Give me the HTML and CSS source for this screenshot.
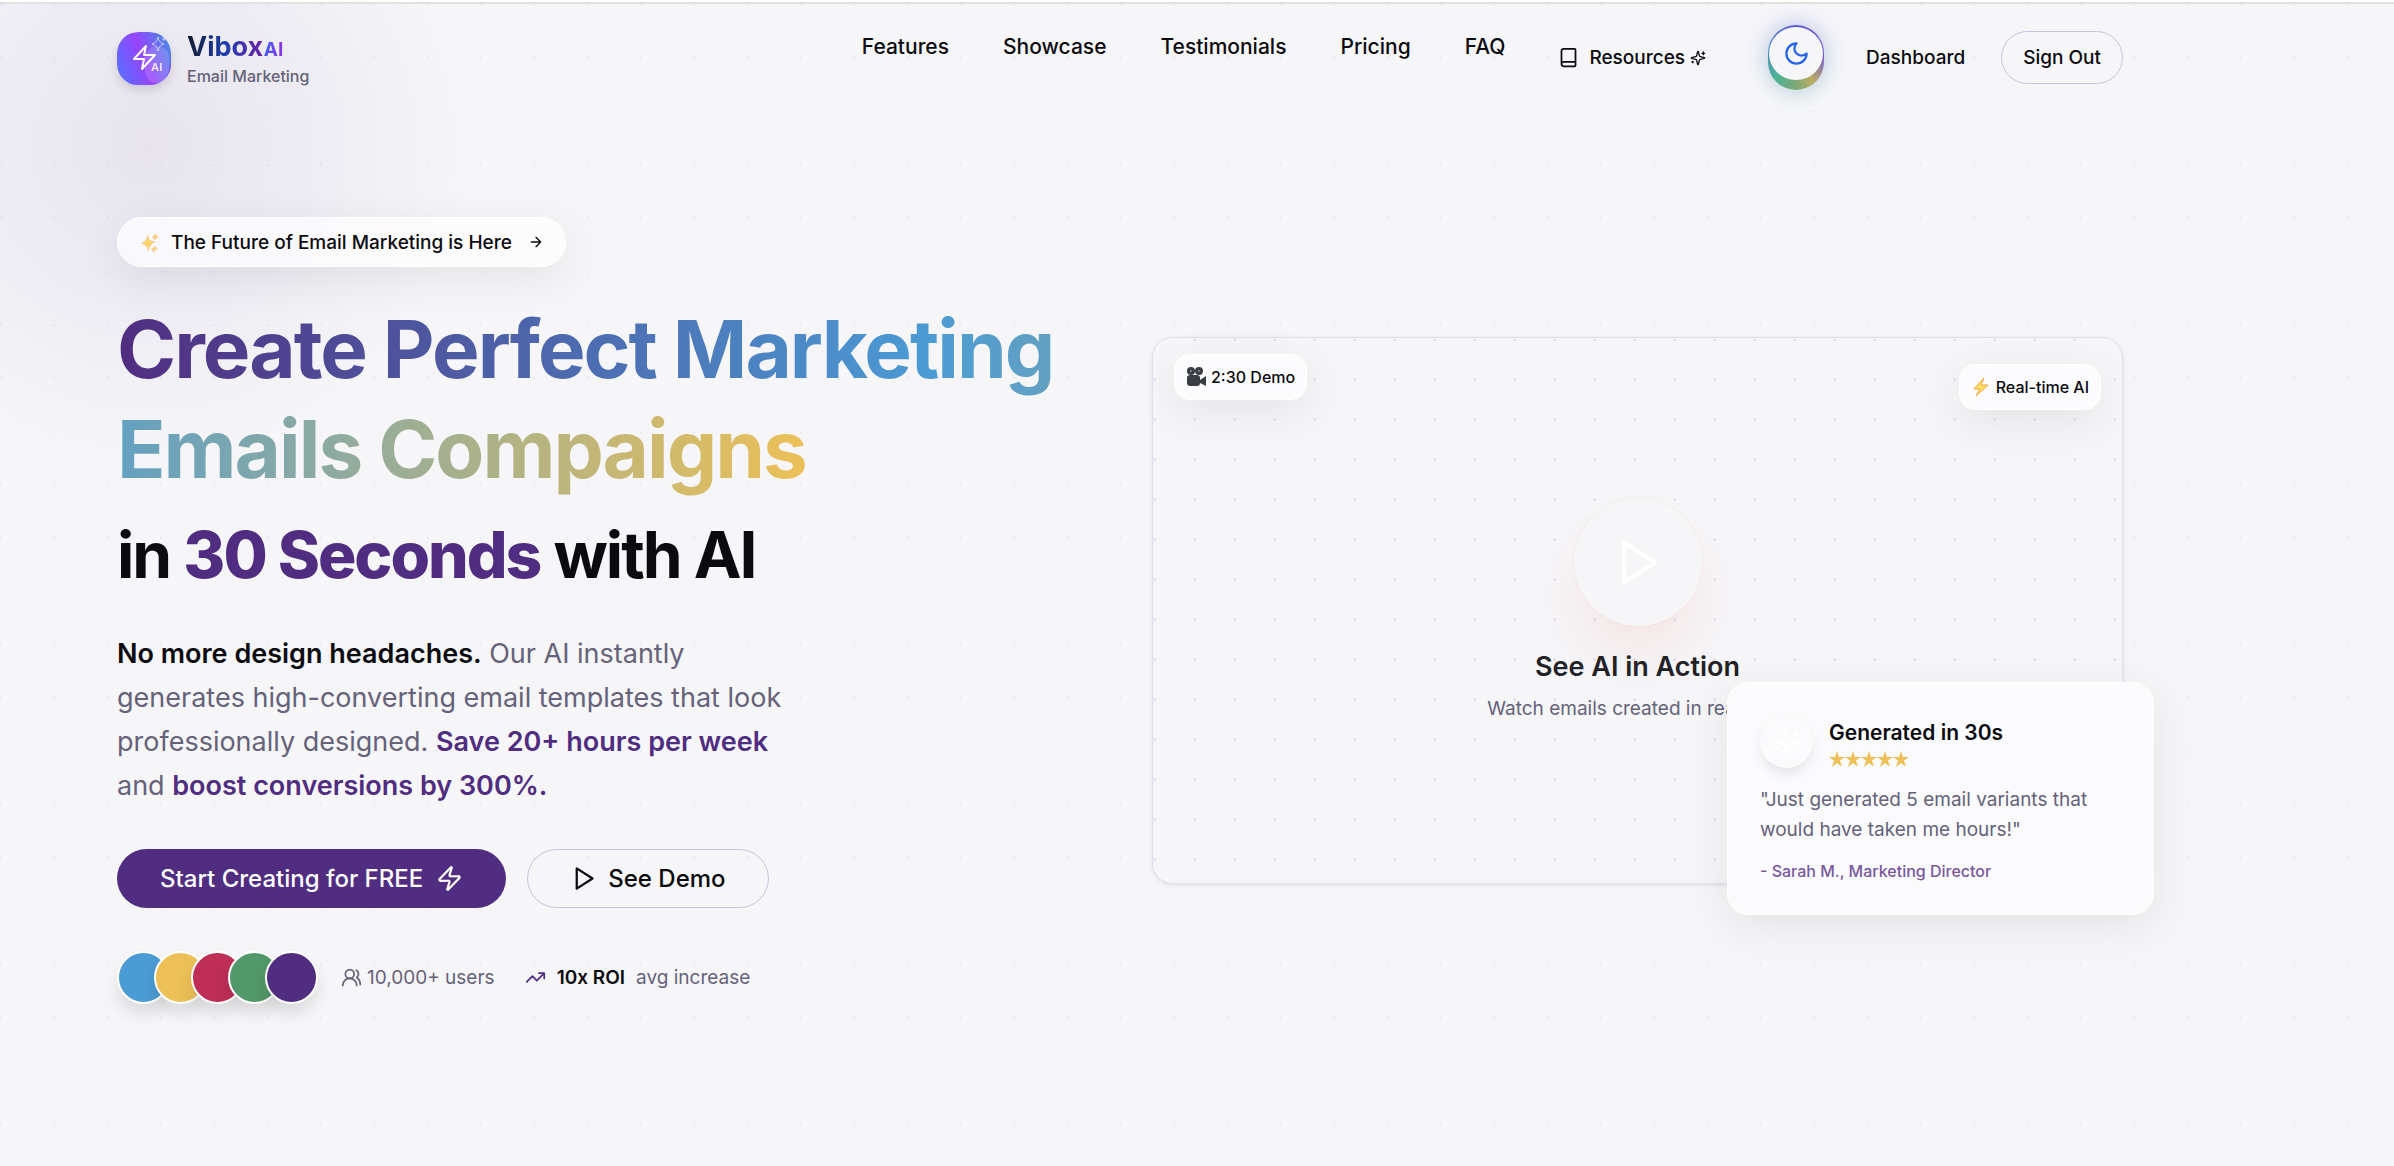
FILE: index.html
```html
<!DOCTYPE html>
<html lang="en">
<head>
    <meta charset="UTF-8">
    <meta name="viewport" content="width=device-width, initial-scale=1.0">
    <title>Vibox AI - Email Marketing</title>
    <link rel="stylesheet" href="styles.css">
</head>
<body>
    <header class="site-header">
        <div class="container nav">
            <a href="#" class="brand">
                <svg class="brand-logo" viewBox="0 0 54 54" aria-hidden="true">
                    <defs>
                        <linearGradient id="logoFill" x1="0" y1="0.7" x2="1" y2="0.3">
                            <stop offset="0" stop-color="#5b6cff"/>
                            <stop offset="0.5" stop-color="#9743fb"/>
                            <stop offset="1" stop-color="#4f86e8"/>
                        </linearGradient>
                        <clipPath id="logoClip"><rect width="54" height="53" rx="21"/></clipPath>
                    </defs>
                    <g clip-path="url(#logoClip)">
                        <rect width="54" height="53" fill="url(#logoFill)"/>
                        <path d="M54 31V53H40C48 49 52 42 54 31Z" fill="#8a1ff0"/>
                        <path d="M0 38V53H18C8 50 3 46 0 38Z" fill="#4458f0"/>
                        <rect x="28" y="14" width="24" height="37" rx="12" fill="#fff" opacity="0.15"/>
                    </g>
                    <path d="M29 14L17 27H27L25 37L38 23H27Z" fill="none" stroke="#fff" stroke-width="2" stroke-linejoin="round"/>
                    <path d="M41 5Q42 11 47 12Q42 13 41 19Q40 13 35 12Q40 11 41 5ZM47 5V9M45 7H49" fill="none" stroke="#fff" stroke-width="1" opacity="0.6"/>
                    <text x="34" y="39" class="logo-text">AI</text>
                </svg>
                <span class="brand-text">
                    <span class="brand-name"><b>Vibox</b> <small>AI</small></span>
                    <span class="brand-tag">Email Marketing</span>
                </span>
            </a>
            <nav class="nav-links">
                <a href="#features">Features</a>
                <a href="#showcase">Showcase</a>
                <a href="#testimonials">Testimonials</a>
                <a href="#pricing">Pricing</a>
                <a href="#faq">FAQ</a>
            </nav>
            <div class="nav-actions">
                <button type="button" class="btn-resources">
                    <svg class="icon" viewBox="0 0 24 24"><path d="M4 19.5v-15A2.5 2.5 0 0 1 6.5 2H19a1 1 0 0 1 1 1v18a1 1 0 0 1-1 1H6.5a1 1 0 0 1 0-5H20"/></svg>
                    <span>Resources</span>
                    <svg class="icon icon-sm" viewBox="0 0 24 24"><path d="M9.937 15.5A2 2 0 0 0 8.5 14.063l-6.135-1.582a.5.5 0 0 1 0-.962L8.5 9.936A2 2 0 0 0 9.937 8.5l1.582-6.135a.5.5 0 0 1 .963 0L14.063 8.5A2 2 0 0 0 15.5 9.937l6.135 1.581a.5.5 0 0 1 0 .964L15.5 14.063a2 2 0 0 0-1.437 1.437l-1.582 6.135a.5.5 0 0 1-.963 0zM20 3v4M22 5h-4M4 17v2M5 18H3"/></svg>
                </button>
                <button type="button" class="theme-toggle" aria-label="Toggle theme">
                    <span class="theme-face">
                        <svg class="icon icon-lg" viewBox="0 0 24 24"><path d="M12 3a6 6 0 0 0 9 9 9 9 0 1 1-9-9Z"/></svg>
                    </span>
                </button>
                <a href="#dashboard" class="link-dashboard">Dashboard</a>
                <button type="button" class="btn-signout">Sign Out</button>
            </div>
        </div>
    </header>

    <main class="container hero">
        <section class="hero-copy">
            <a href="#" class="pill">
                <svg class="spark" viewBox="0 0 24 24"><path d="M10 4Q11 12 18 11Q12 14 11 21Q9 14 3 13Q9 11 10 4ZM19 2Q19 5 22 6Q19 6 18 9Q18 6 15 6Q18 5 19 2ZM18 16Q18 18 21 19Q18 19 17 23Q17 20 14 20Q17 19 18 16Z"/></svg>
                <span>The Future of Email Marketing is Here</span>
                <svg class="icon icon-sm" viewBox="0 0 24 24"><path d="M5 12h14M12 5l7 7-7 7"/></svg>
            </a>
            <h1>
                <span class="gradient-text">Create Perfect Marketing<br>Emails Compaigns</span>
                <span class="sub-title">in <em>30 Seconds</em> with AI</span>
            </h1>
            <p class="lead"><strong>No more design headaches.</strong> Our AI instantly generates high-converting email templates that look professionally designed. <b>Save 20+ hours per week</b> and <b>boost conversions by 300%.</b></p>
            <div class="cta">
                <button type="button" class="btn-primary">
                    <span>Start Creating for FREE</span>
                    <svg class="icon icon-lg" viewBox="0 0 24 24"><path d="M4 14a1 1 0 0 1-.78-1.63l9.9-10.2a.5.5 0 0 1 .86.46l-1.92 6.02A1 1 0 0 0 13 10h7a1 1 0 0 1 .78 1.63l-9.9 10.2a.5.5 0 0 1-.86-.46l1.92-6.02A1 1 0 0 0 11 14z"/></svg>
                </button>
                <button type="button" class="btn-outline">
                    <svg class="icon icon-lg" viewBox="0 0 24 24"><path d="M6 3l14 9-14 9z"/></svg>
                    <span>See Demo</span>
                </button>
            </div>
            <div class="proof">
                <div class="avatars">
                    <span class="avatar blue"></span>
                    <span class="avatar yellow"></span>
                    <span class="avatar red"></span>
                    <span class="avatar green"></span>
                    <span class="avatar purple"></span>
                </div>
                <div class="users">
                    <svg class="icon" viewBox="0 0 24 24"><path d="M18 21a8 8 0 0 0-16 0M22 20c0-3.37-2-6.5-4-8a5 5 0 0 0-.45-8.3"/><circle cx="10" cy="8" r="5"/></svg>
                    <span>10,000+ users</span>
                </div>
                <div class="roi">
                    <svg class="icon" viewBox="0 0 24 24"><path d="M22 7l-8.500 8.500-5-5L2 17M16 7h6v6"/></svg>
                    <strong>10x ROI</strong>
                    <span>avg increase</span>
                </div>
            </div>
        </section>

        <section class="demo">
            <div class="badge badge-left">
                <svg class="camera" viewBox="0 0 20 20"><circle cx="5" cy="4" r="4"/><circle cx="13" cy="4" r="4"/><rect x="1" y="8" width="13" height="11" rx="3"/><path d="M14 13L20 9V19L14 16Z"/><circle cx="5" cy="4" r="1" class="hole"/><circle cx="13" cy="4" r="1" class="hole"/></svg>
                <span>2:30 Demo</span>
            </div>
            <div class="badge badge-right">
                <svg class="bolt" viewBox="0 0 20 20"><path d="M13 1L3 12H9L5 19L17 8H10Z"/></svg>
                <span>Real-time AI</span>
            </div>
            <button type="button" class="play" aria-label="Play demo">
                <svg class="icon" viewBox="0 0 24 24"><path d="M6 3l14 9-14 9z"/></svg>
            </button>
            <h3>See AI in Action</h3>
            <p>Watch emails created in real-time</p>
            <div class="quote">
                <div class="quote-head">
                    <span class="quote-icon">
                        <svg class="icon" viewBox="0 0 24 24"><path d="M9.937 15.5A2 2 0 0 0 8.5 14.063l-6.135-1.582a.5.5 0 0 1 0-.962L8.5 9.936A2 2 0 0 0 9.937 8.5l1.582-6.135a.5.5 0 0 1 .963 0L14.063 8.5A2 2 0 0 0 15.5 9.937l6.135 1.581a.5.5 0 0 1 0 .964L15.5 14.063a2 2 0 0 0-1.437 1.437l-1.582 6.135a.5.5 0 0 1-.963 0zM20 3v4M22 5h-4M4 17v2M5 18H3"/></svg>
                    </span>
                    <div>
                        <h4>Generated in 30s</h4>
                        <svg class="stars" viewBox="0 0 80 16" role="img" aria-label="5 stars">
                            <defs><path id="star" d="M8 0L10 6H16L11 9.500L13 16L8 12L3 16L5 9.500L0 6H6Z"/></defs>
                            <use href="#star"/><use href="#star" x="16"/><use href="#star" x="32"/><use href="#star" x="48"/><use href="#star" x="64"/>
                        </svg>
                    </div>
                </div>
                <p class="quote-text">"Just generated 5 email variants that would have taken me hours!"</p>
                <p class="quote-author">- Sarah M., Marketing Director</p>
            </div>
        </section>
    </main>
</body>
</html>
```
FILE: styles.css
```css
* {
    box-sizing: border-box;
}

body {
    font-family: Inter, "Liberation Sans", sans-serif;
    margin: 0;
    min-height: 100vh;
    color: #0b0b0f;
    background-color: #f6f6f9;
    /* faint dot grid, glow in the top left corner */
    background-image:
        url("data:image/svg+xml,%3Csvg xmlns='http://www.w3.org/2000/svg' width='160' height='160' fill='%23502d80' fill-opacity='0.06'%3E%3Cdefs%3E%3Cg id='r'%3E%3Ccircle cx='1' cy='5' r='1.3'/%3E%3Ccircle cx='54' cy='5' r='1.3'/%3E%3Ccircle cx='108' cy='5' r='1.3'/%3E%3C/g%3E%3C/defs%3E%3Cuse href='%23r'/%3E%3Cuse href='%23r' y='53'/%3E%3Cuse href='%23r' y='107'/%3E%3C/svg%3E"),
        radial-gradient(circle at 150px 145px, rgba(80, 45, 128, 0.09), rgba(80, 45, 128, 0.05) 150px, rgba(80, 45, 128, 0) 320px);
    background-repeat: repeat, no-repeat;
}

a {
    color: inherit;
    text-decoration: none;
}

button {
    font-family: inherit;
    color: inherit;
    background: none;
    border: none;
    padding: 0;
    cursor: pointer;
}

.container {
    max-width: 2240px;
    padding: 0 117px;
}

.icon {
    width: 21px;
    height: 21px;
    fill: none;
    stroke: currentColor;
    stroke-width: 2;
    stroke-linecap: round;
    stroke-linejoin: round;
    flex-shrink: 0;
}

.icon-sm {
    width: 16px;
    height: 16px;
}

.icon-lg {
    width: 27px;
    height: 27px;
}

/* header */
.site-header {
    border-top: 2px solid #fff;
    box-shadow: inset 0 2px 0 #e1e1de;
}

.nav {
    display: flex;
    align-items: flex-start;
    padding-top: 23px;
    height: 112px;
}

.brand {
    display: flex;
    align-items: center;
    gap: 16px;
    margin-top: 6px;
}

.brand-logo {
    width: 54px;
    height: 54px;
    border-radius: 21px;
    filter: drop-shadow(0 5px 5px rgba(0, 0, 0, 0.12));
}

.logo-text {
    font-size: 11px;
    font-weight: 700;
    fill: #fff;
    opacity: 0.8;
}

.brand-text {
    display: flex;
    flex-direction: column;
}

.brand-name {
    font-size: 27px;
    line-height: 32px;
}

.brand-name b {
    background: linear-gradient(90deg, #111c30, #1e3fae 50%, #6b21a8);
    -webkit-background-clip: text;
    background-clip: text;
    color: transparent;
}

.brand-name small {
    font-size: 19px;
    font-weight: 700;
    margin-left: -7px;
    background: linear-gradient(90deg, #3b5bff, #9333ea);
    -webkit-background-clip: text;
    background-clip: text;
    color: transparent;
}

.brand-tag {
    font-size: 16px;
    line-height: 21px;
    font-weight: 500;
    color: #65627a;
}

.nav-links {
    display: flex;
    gap: 54px;
    margin-left: auto;
    margin-top: 6px;
    font-size: 21px;
    line-height: 32px;
    font-weight: 500;
}

.nav-actions {
    display: flex;
    align-items: center;
    margin-left: 53px;
    font-size: 19px;
    font-weight: 500;
}

.btn-resources {
    display: flex;
    align-items: center;
    gap: 10px;
    font-size: 19px;
    font-weight: 500;
}

.btn-resources .icon-sm {
    margin-left: -5px;
}

.theme-toggle {
    display: flex;
    align-items: flex-start;
    width: 56px;
    height: 65px;
    margin: 0 42px 0 62px;
    padding: 2px 1px;
    border-radius: 28px;
    background: conic-gradient(from 0deg, #5b5bd6, #7c5cd0 25%, #b9ad60 40%, #7fa878 50%, #4fb393 62%, #4a86c8 82%, #5b5bd6);
    box-shadow: 0 -3px 21px rgba(90, 90, 214, 0.25), 0 5px 21px rgba(79, 179, 147, 0.2);
}

.theme-face {
    display: flex;
    align-items: center;
    justify-content: center;
    width: 54px;
    height: 53px;
    border-radius: 50%;
    background: #f6f6f9;
    color: #2563eb;
}

.btn-signout {
    height: 53px;
    margin-left: 36px;
    padding: 0 21px;
    border: 1px solid #c9c1db;
    border-radius: 27px;
    font-size: 19px;
    font-weight: 500;
}

/* hero */
.hero {
    display: grid;
    grid-template-columns: 1fr 971px;
    gap: 32px;
    align-items: center;
    padding-top: 103px;
}

.pill {
    display: inline-flex;
    align-items: center;
    height: 50px;
    padding: 0 21px;
    border: 1px solid #fff;
    border-radius: 25px;
    background: rgba(255, 255, 255, 0.7);
    box-shadow: 0 11px 43px rgba(0, 0, 0, 0.08);
    font-size: 19px;
    font-weight: 500;
}

.pill .icon {
    margin-left: 16px;
}

.spark {
    width: 21px;
    height: 21px;
    margin-right: 11px;
    fill: #fcd667;
    stroke: #f5c79a;
    stroke-width: 1;
}

h1 {
    margin: 32px 0 0;
    font-size: 80px;
    line-height: 100px;
    font-weight: 700;
    letter-spacing: -0.025em;
}

.gradient-text {
    background: linear-gradient(90deg, #502d80, #4b9bd4 50%, #ecc057);
    -webkit-background-clip: text;
    background-clip: text;
    color: transparent;
}

.sub-title {
    display: block;
    margin-top: 8px;
    font-size: 64px;
    line-height: 96px;
}

.sub-title em {
    font-style: normal;
    font-weight: 800;
    color: #502d80;
}

.lead {
    max-width: 683px;
    margin: 29px 0 0;
    font-size: 27px;
    line-height: 44px;
    color: #65627a;
}

.lead strong {
    font-weight: 600;
    color: #0b0b0f;
}

.lead b {
    font-weight: 600;
    color: #502d80;
}

.cta {
    display: flex;
    gap: 21px;
    margin-top: 41px;
}

.btn-primary,
.btn-outline {
    display: flex;
    align-items: center;
    height: 59px;
    border-radius: 30px;
    font-size: 24px;
    font-weight: 500;
}

.btn-primary {
    gap: 13px;
    padding: 0 43px;
    background: #502d80;
    color: #fff;
}

.btn-outline {
    gap: 11px;
    padding: 0 42px;
    border: 1px solid #c9c1db;
}

.proof {
    display: flex;
    align-items: center;
    margin-top: 43px;
    font-size: 19px;
    color: #65627a;
}

.avatars {
    display: flex;
}

.avatar {
    width: 53px;
    height: 53px;
    border: 2px solid #fff;
    border-radius: 50%;
    box-shadow: 0 11px 16px rgba(0, 0, 0, 0.1);
}

.avatar + .avatar {
    margin-left: -16px;
}

.blue { background: #4b9bd4; }
.yellow { background: #ecc057; }
.red { background: #be2e56; }
.green { background: #52986a; }
.purple { background: #502d80; }

.users {
    display: flex;
    align-items: center;
    gap: 5px;
    margin-left: 23px;
}

.roi {
    display: flex;
    align-items: center;
    gap: 11px;
    margin-left: 30px;
}

.roi .icon {
    color: #502d80;
}

.roi strong {
    font-weight: 600;
    color: #0b0b0f;
}

/* demo card */
.demo {
    position: relative;
    display: flex;
    flex-direction: column;
    align-items: center;
    height: 547px;
    padding-top: 160px;
    border: 1px solid #e2e0ec;
    border-radius: 21px;
    background: #f6f6f9 url("data:image/svg+xml,%3Csvg xmlns='http://www.w3.org/2000/svg' width='40' height='40'%3E%3Ccircle cx='1.5' cy='1.5' r='1.5' fill='%23e2e0ec'/%3E%3C/svg%3E");
    box-shadow: 0 1px 4px rgba(0, 0, 0, 0.1);
}

.badge {
    position: absolute;
    display: flex;
    align-items: center;
    gap: 5px;
    height: 46px;
    padding: 0 11px;
    border: 1px solid #fff;
    border-radius: 16px;
    background: #fcfcfe;
    box-shadow: 0 11px 43px rgba(0, 0, 0, 0.08);
    font-size: 16px;
    font-weight: 500;
}

.badge-left {
    top: 16px;
    left: 21px;
}

.badge-right {
    top: 26px;
    right: 21px;
}

.badge svg {
    width: 20px;
    height: 20px;
}

.camera {
    fill: #3a3d44;
}

.hole {
    fill: #8a8d94;
}

.bolt {
    fill: #fde063;
    stroke: #f3a23c;
    stroke-width: 1;
}

.play {
    display: flex;
    align-items: center;
    justify-content: center;
    width: 128px;
    height: 128px;
    border-radius: 50%;
    background: #f6f6f9;
    box-shadow: 0 0 2px rgba(240, 110, 80, 0.15), 0 33px 67px -11px rgba(240, 110, 80, 0.16);
    color: #fff;
}

.play .icon {
    width: 53px;
    height: 53px;
}

.demo h3 {
    margin: 23px 0 0;
    font-size: 27px;
    line-height: 36px;
    font-weight: 600;
    color: #222226;
}

.demo > p {
    margin: 10px 0 0;
    font-size: 19px;
    line-height: 27px;
    color: #65627a;
}

.quote {
    position: absolute;
    right: -32px;
    bottom: -32px;
    width: 427px;
    padding: 32px;
    border: 1px solid #fff;
    border-radius: 21px;
    background: #fbfbfd;
    box-shadow: 0 11px 43px rgba(0, 0, 0, 0.08);
}

.quote-head {
    display: flex;
    align-items: center;
    gap: 16px;
}

.quote-icon {
    display: flex;
    align-items: center;
    justify-content: center;
    width: 53px;
    height: 53px;
    border-radius: 50%;
    background: #fbfbfd;
    box-shadow: 0 7px 13px -2px rgba(0, 0, 0, 0.1);
    color: #fff;
}

.quote-icon .icon {
    width: 27px;
    height: 27px;
}

.quote h4 {
    margin: 0;
    font-size: 21px;
    line-height: 32px;
    font-weight: 600;
}

.stars {
    display: block;
    width: 80px;
    height: 16px;
    margin-top: 2px;
    fill: #ecc057;
}

.quote-text {
    margin: 17px 0 0;
    font-size: 19px;
    line-height: 30px;
    color: #65627a;
}

.quote-author {
    margin: 16px 0 0;
    font-size: 16px;
    line-height: 21px;
    font-weight: 500;
    color: #7957a0;
}
```
